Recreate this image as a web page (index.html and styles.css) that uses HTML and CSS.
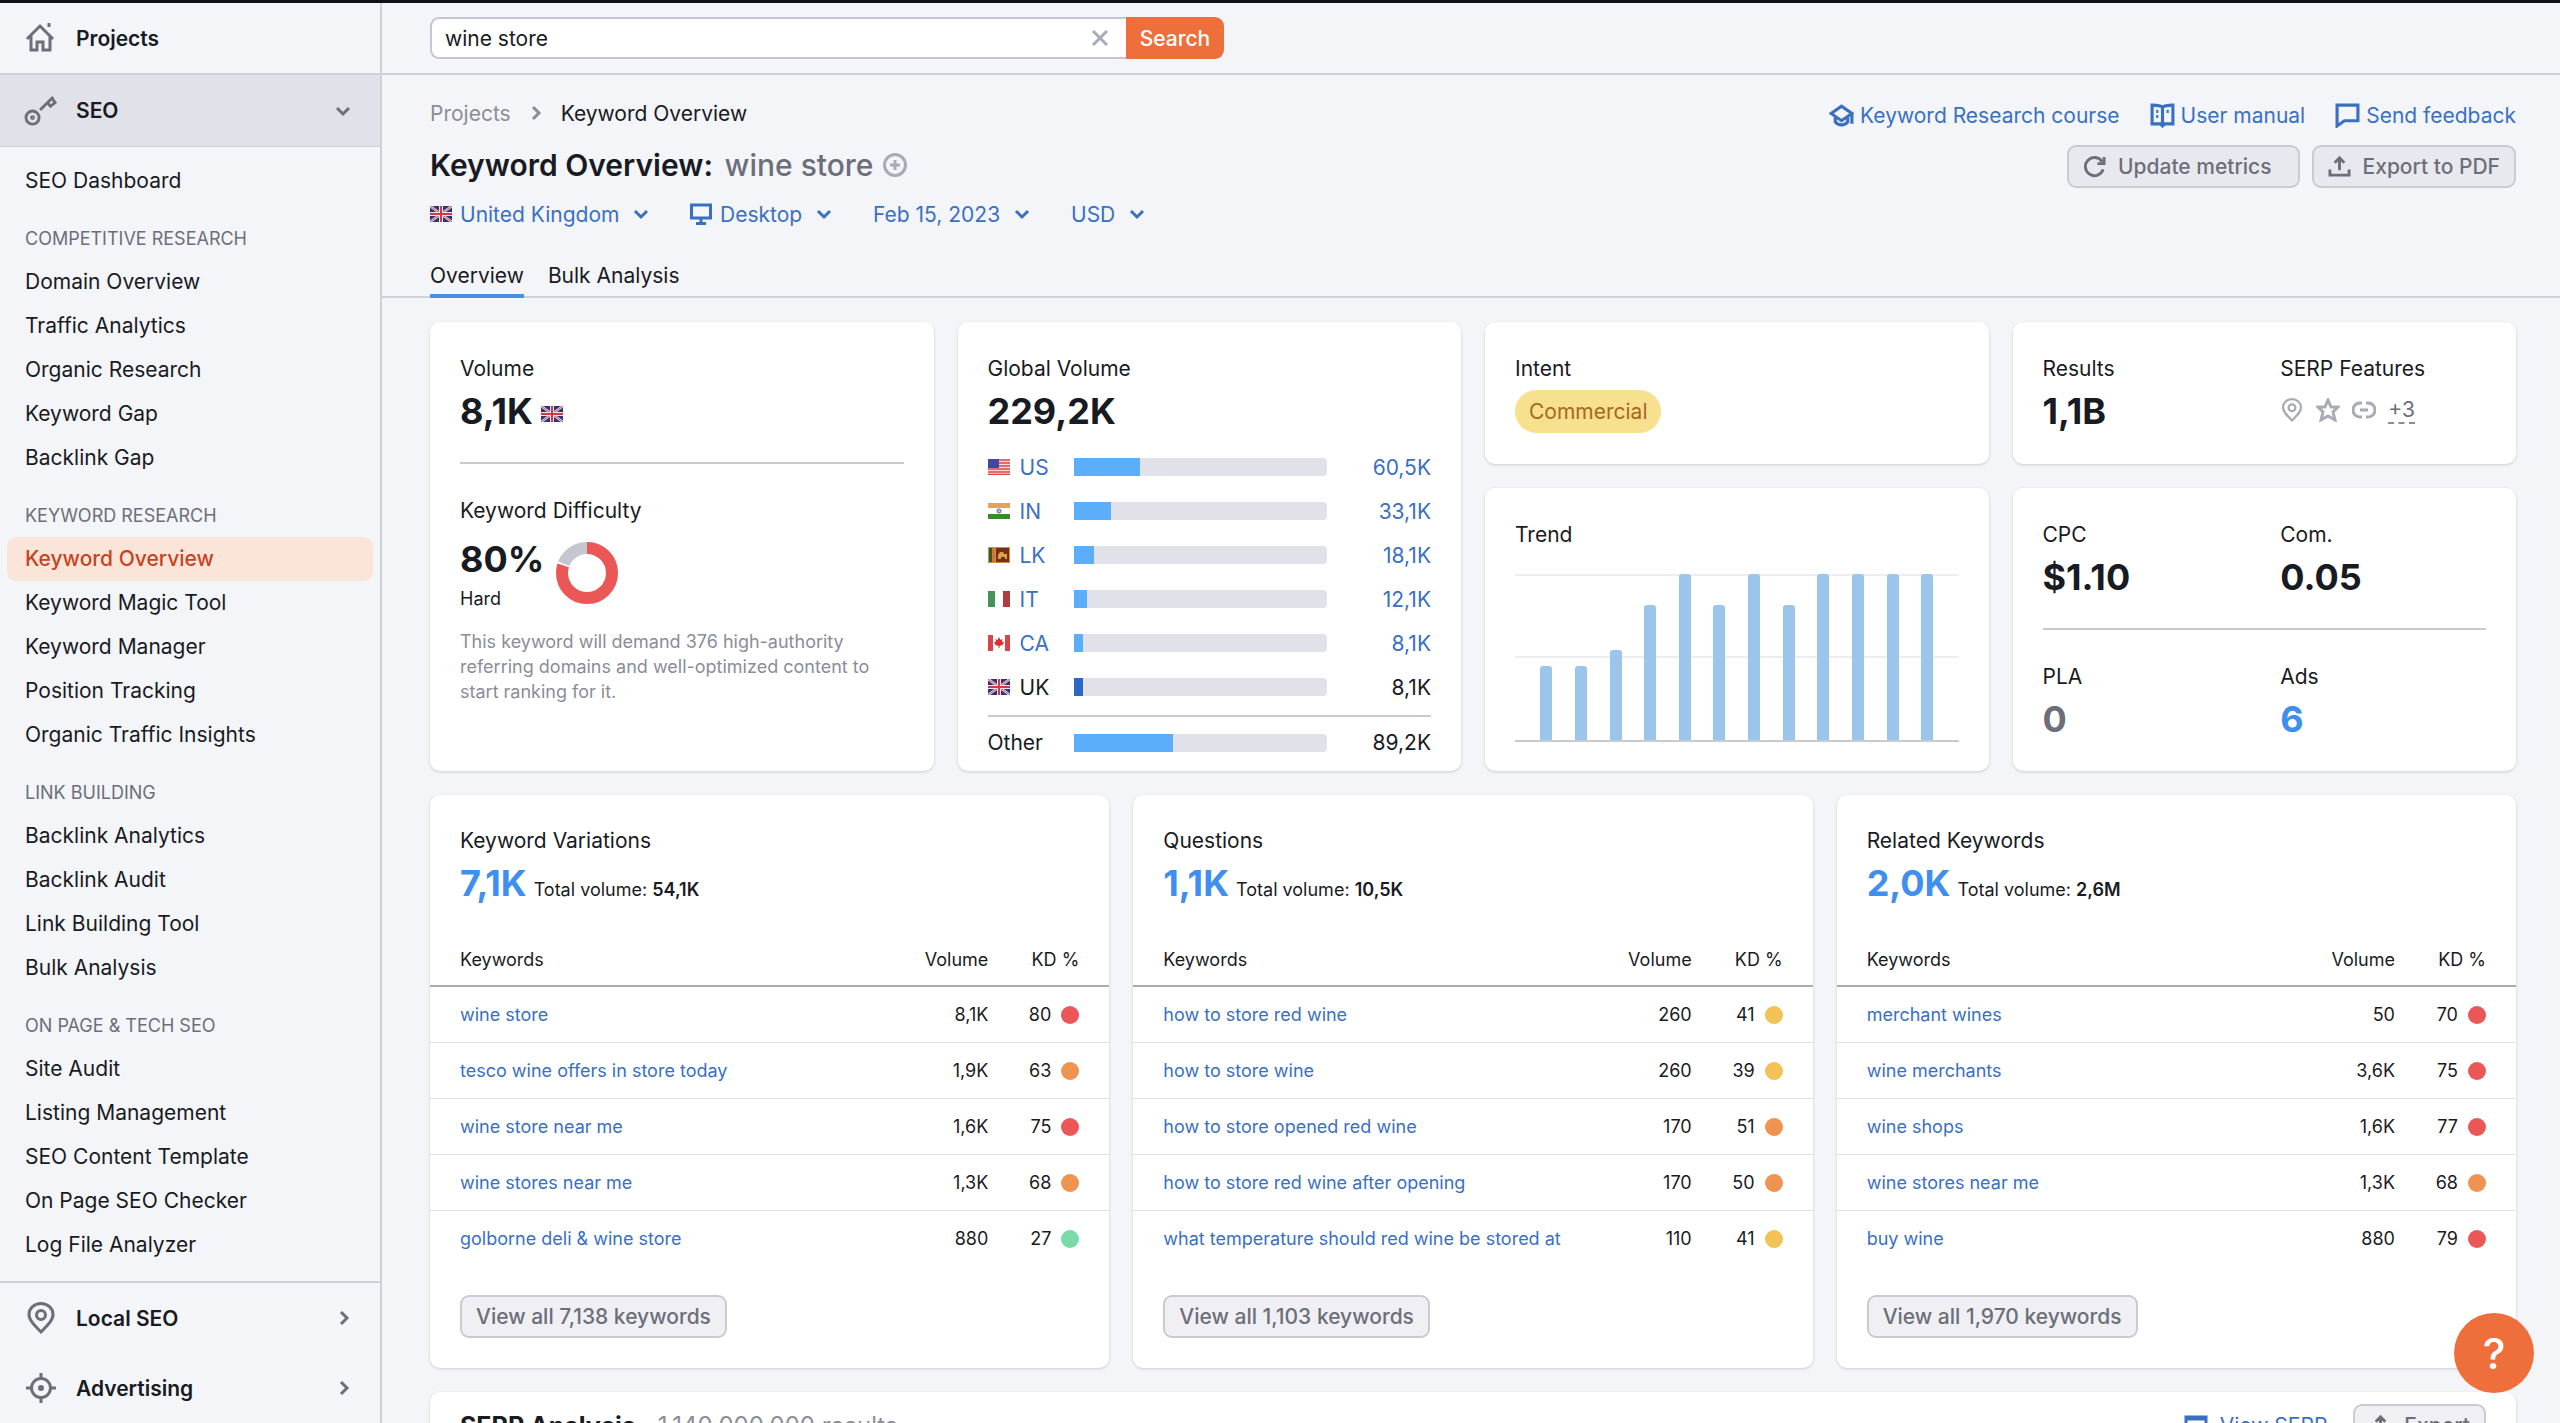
FILE: index.html
```html
<!DOCTYPE html>
<html lang="en">

<head>
    <meta charset="UTF-8">
    <meta name="viewport" content="width=device-width, initial-scale=1.0">
    <title>Keyword Overview: wine store</title>
    <link rel="stylesheet" href="styles.css">
</head>

<body>
    <!-- shared icons -->
    <svg class="sprite" aria-hidden="true">
        <symbol id="down" viewBox="0 0 18 12"><path d="M3 3l6 6 6-6" /></symbol>
        <symbol id="right" viewBox="0 0 12 18"><path d="M3 3l6 6-6 6" /></symbol>
        <symbol id="export" viewBox="0 0 24 24"><path d="M2 15v6h20v-6M12 16V3M7 8l5-5 5 5" /></symbol>
        <symbol id="pin" viewBox="0 0 30 32"><path d="M15 30C8 23 3 18 3 12.500a12 11 0 0 1 24 0C27 18 22 23 15 30z" /><circle cx="15" cy="13" r="4.500" /></symbol>
        <symbol id="uk" viewBox="0 0 22 16">
            <rect width="22" height="16" fill="#2b3478" />
            <path d="M0 0l22 16M22 0L0 16" stroke="#e9dfe8" stroke-width="2.500" />
            <path d="M0 0l22 16M22 0L0 16" stroke="#c8505e" stroke-width="1" />
            <path d="M11 0v16M0 8h22" stroke="#f3e3e8" stroke-width="4" />
            <path d="M11 0v16M0 8h22" stroke="#cf3a44" stroke-width="2" />
        </symbol>
        <symbol id="us" viewBox="0 0 22 16">
            <rect width="22" height="16" fill="#f6d9da" />
            <path d="M0 1h22M0 4h22M0 7h22M0 10h22M0 13h22M0 15.500h22" stroke="#d9484e" stroke-width="1.500" />
            <rect width="11" height="9" fill="#4247a0" />
        </symbol>
        <symbol id="in" viewBox="0 0 22 16">
            <rect width="22" height="16" fill="#fff" />
            <rect width="22" height="5" fill="#e8a05a" />
            <rect y="11" width="22" height="5" fill="#3c8a2e" />
            <circle cx="11" cy="8" r="2" fill="#b9bfd8" stroke="#5a6596" stroke-width="1" />
        </symbol>
        <symbol id="lk" viewBox="0 0 22 16">
            <rect width="22" height="16" fill="#cf9236" />
            <rect x="1" y="1" width="3" height="14" fill="#2f5a3c" />
            <rect x="4" y="1" width="3" height="14" fill="#d8752c" />
            <rect x="8" y="1" width="13" height="14" fill="#7a2a20" />
            <path d="M10 12V8l2-3h3l1 2h3v5h-2v-2h-4v2z" fill="#d9a53c" />
        </symbol>
        <symbol id="it" viewBox="0 0 22 16">
            <rect width="22" height="16" fill="#fff" />
            <rect width="7" height="16" fill="#43935a" />
            <rect x="15" width="7" height="16" fill="#b23b40" />
        </symbol>
        <symbol id="ca" viewBox="0 0 22 16">
            <rect width="22" height="16" fill="#fff" />
            <path d="M0 0h5v16H0zM17 0h5v16h-5z" fill="#d5454c" />
            <path d="M11 2l1.500 3 2-1-.5 3 2 0-1.500 3-3 1v2h-1v-2l-3-1L6 7h2l-.5-3 2 1z" fill="#d9302f" />
        </symbol>
    </svg>

    <div class="app">
        <nav class="sidebar">
            <a class="sidebar__group" href="#">
                <svg class="icon" viewBox="0 0 32 32"><path d="M2 17L15 4l13 13M6 14v14h6v-8h6v8h7V14M24 1v4" /></svg>
                <span>Projects</span>
            </a>
            <button class="sidebar__group sidebar__group--open">
                <svg class="icon" viewBox="0 0 34 34"><circle cx="8" cy="24" r="7" /><circle cx="8" cy="24" r="1" /><path d="M16 16L30 2M24 8l3 4 5-4-3-4" /></svg>
                <span>SEO</span>
                <svg class="chevron"><use href="#down" /></svg>
            </button>
            <div class="sidebar__menu">
                <a href="#">SEO Dashboard</a>
                <h2>COMPETITIVE RESEARCH</h2>
                <a href="#">Domain Overview</a>
                <a href="#">Traffic Analytics</a>
                <a href="#">Organic Research</a>
                <a href="#">Keyword Gap</a>
                <a href="#">Backlink Gap</a>
                <h2>KEYWORD RESEARCH</h2>
                <a class="active" href="#">Keyword Overview</a>
                <a href="#">Keyword Magic Tool</a>
                <a href="#">Keyword Manager</a>
                <a href="#">Position Tracking</a>
                <a href="#">Organic Traffic Insights</a>
                <h2>LINK BUILDING</h2>
                <a href="#">Backlink Analytics</a>
                <a href="#">Backlink Audit</a>
                <a href="#">Link Building Tool</a>
                <a href="#">Bulk Analysis</a>
                <h2>ON PAGE &amp; TECH SEO</h2>
                <a href="#">Site Audit</a>
                <a href="#">Listing Management</a>
                <a href="#">SEO Content Template</a>
                <a href="#">On Page SEO Checker</a>
                <a href="#">Log File Analyzer</a>
            </div>
            <button class="sidebar__group">
                <svg class="icon"><use href="#pin" /></svg>
                <span>Local SEO</span>
                <svg class="chevron chevron--right"><use href="#right" /></svg>
            </button>
            <button class="sidebar__group">
                <svg class="icon" viewBox="0 0 32 32"><circle cx="16" cy="16" r="9.500" /><circle cx="16" cy="16" r="1.500" /><path d="M16 1v6M16 25v6M1 16h6M25 16h6" /></svg>
                <span>Advertising</span>
                <svg class="chevron chevron--right"><use href="#right" /></svg>
            </button>
        </nav>

        <main class="main">
            <form class="topbar">
                <div class="search">
                    <input class="search__input" type="text" value="wine store" aria-label="Keyword">
                    <button class="search__clear" type="button" aria-label="Clear">
                        <svg viewBox="0 0 16 16"><path d="M1 1l14 14M15 1L1 15" /></svg>
                    </button>
                </div>
                <button class="search__button" type="submit">Search</button>
            </form>

            <header class="header">
                <div class="header__left">
                    <div class="breadcrumb">
                        <a href="#">Projects</a>
                        <svg class="chevron chevron--right"><use href="#right" /></svg>
                        <span>Keyword Overview</span>
                    </div>
                    <div class="title">
                        <h1>Keyword Overview: <span>wine store</span></h1>
                        <button aria-label="Add keyword">
                            <svg viewBox="0 0 24 24"><circle cx="12" cy="12" r="10.500" /><path d="M12 7v10M7 12h10" /></svg>
                        </button>
                    </div>
                    <div class="filters">
                        <label class="filter">
                            <svg class="flag"><use href="#uk" /></svg>
                            <select aria-label="Country"><option>United Kingdom</option></select>
                            <svg class="chevron"><use href="#down" /></svg>
                        </label>
                        <label class="filter">
                            <svg class="filter__icon" viewBox="0 0 22 22"><path d="M1.500 2h19v13h-19zM11 15v5M6 20.500h10" /></svg>
                            <select aria-label="Device"><option>Desktop</option></select>
                            <svg class="chevron"><use href="#down" /></svg>
                        </label>
                        <label class="filter">
                            <select aria-label="Date"><option>Feb 15, 2023</option></select>
                            <svg class="chevron"><use href="#down" /></svg>
                        </label>
                        <label class="filter">
                            <select aria-label="Currency"><option>USD</option></select>
                            <svg class="chevron"><use href="#down" /></svg>
                        </label>
                    </div>
                    <div class="tabs">
                        <a class="active" href="#">Overview</a>
                        <a href="#">Bulk Analysis</a>
                    </div>
                </div>
                <div class="header__right">
                    <div class="links">
                        <a href="#"><svg viewBox="0 0 24 24"><path d="M2 10l10-7 10 7-10 7zM6 14v4c3 4 9 4 12 0v-4M22 10v10" /></svg>Keyword Research course</a>
                        <a href="#"><svg viewBox="0 0 24 24"><path d="M12 4C10 2 5 2 2 2v18h8l2 2 2-2h8V2c-3 0-8 0-10 2zM12 4v17M6 8h2M6 13h2M16 8h2" /></svg>User manual</a>
                        <a href="#"><svg viewBox="0 0 24 24"><path d="M2 2h20v15H9l-7 5z" /></svg>Send feedback</a>
                    </div>
                    <div class="actions">
                        <button class="btn btn--wide"><svg viewBox="0 0 24 24"><path d="M21 15a9.500 9.500 0 1 1-1-8M22 2v7h-7" /></svg>Update metrics</button>
                        <button class="btn"><svg><use href="#export" /></svg>Export to PDF</button>
                    </div>
                </div>
            </header>

            <div class="content">
                <section class="summary">
                    <div class="card card--tall">
                        <h3>Volume</h3>
                        <p class="value">8,1K <svg class="flag"><use href="#uk" /></svg></p>
                        <hr>
                        <h3>Keyword Difficulty</h3>
                        <div class="difficulty">
                            <div>
                                <p class="value">80%</p>
                                <p class="difficulty__level">Hard</p>
                            </div>
                            <svg class="donut" viewBox="0 0 62 62">
                                <circle cx="31" cy="31" r="25" pathLength="100" stroke="#c4c7cf" />
                                <circle cx="31" cy="31" r="25" pathLength="100" stroke="#fff" stroke-dasharray="81 100" />
                                <circle cx="31" cy="31" r="25" pathLength="100" stroke="#eb5757" stroke-dasharray="80 100" />
                            </svg>
                        </div>
                        <p class="difficulty__note">This keyword will demand 376 high-authority referring domains and well-optimized content to start ranking for it.</p>
                    </div>

                    <div class="card card--tall card--global">
                        <h3>Global Volume</h3>
                        <p class="value">229,2K</p>
                        <ul class="countries">
                            <li><svg class="flag"><use href="#us" /></svg><a class="code" href="#">US</a><div class="bar"><div style="width: 26%"></div></div><a class="num" href="#">60,5K</a></li>
                            <li><svg class="flag"><use href="#in" /></svg><a class="code" href="#">IN</a><div class="bar"><div style="width: 14.5%"></div></div><a class="num" href="#">33,1K</a></li>
                            <li><svg class="flag"><use href="#lk" /></svg><a class="code" href="#">LK</a><div class="bar"><div style="width: 8%"></div></div><a class="num" href="#">18,1K</a></li>
                            <li><svg class="flag"><use href="#it" /></svg><a class="code" href="#">IT</a><div class="bar"><div style="width: 5%"></div></div><a class="num" href="#">12,1K</a></li>
                            <li><svg class="flag"><use href="#ca" /></svg><a class="code" href="#">CA</a><div class="bar"><div style="width: 3.6%"></div></div><a class="num" href="#">8,1K</a></li>
                            <li class="current"><svg class="flag"><use href="#uk" /></svg><span class="code">UK</span><div class="bar"><div style="width: 3.6%"></div></div><span class="num">8,1K</span></li>
                            <li class="other"><span class="code">Other</span><div class="bar"><div style="width: 39%"></div></div><span class="num">89,2K</span></li>
                        </ul>
                    </div>

                    <div class="card">
                        <h3>Intent</h3>
                        <div class="intent"><span>Commercial</span></div>
                    </div>

                    <div class="card columns">
                        <div>
                            <h3>Results</h3>
                            <p class="value">1,1B</p>
                        </div>
                        <div>
                            <h3>SERP Features</h3>
                            <div class="features">
                                <svg><use href="#pin" /></svg>
                                <svg viewBox="0 0 24 24"><path d="M12 2l3 7h7l-5 5 2 8-7-4-7 4 2-8-5-5h7z" /></svg>
                                <svg viewBox="0 0 24 24"><path d="M10 5H8a7 7 0 0 0 0 14h2M14 5h2a7 7 0 0 1 0 14h-2M8 12h8" /></svg>
                                <a href="#">+3</a>
                            </div>
                        </div>
                    </div>

                    <div class="card">
                        <h3>Trend</h3>
                        <div class="trend">
                            <div style="height: 44%"></div>
                            <div style="height: 44%"></div>
                            <div style="height: 54%"></div>
                            <div style="height: 81%"></div>
                            <div style="height: 100%"></div>
                            <div style="height: 81%"></div>
                            <div style="height: 100%"></div>
                            <div style="height: 81%"></div>
                            <div style="height: 100%"></div>
                            <div style="height: 100%"></div>
                            <div style="height: 100%"></div>
                            <div style="height: 100%"></div>
                        </div>
                    </div>

                    <div class="card">
                        <div class="columns">
                            <div>
                                <h3>CPC</h3>
                                <p class="value">$1.10</p>
                            </div>
                            <div>
                                <h3>Com.</h3>
                                <p class="value">0.05</p>
                            </div>
                        </div>
                        <hr>
                        <div class="columns">
                            <div>
                                <h3>PLA</h3>
                                <p class="value value--muted">0</p>
                            </div>
                            <div>
                                <h3>Ads</h3>
                                <p class="value value--link">6</p>
                            </div>
                        </div>
                    </div>
                </section>

                <section class="ideas">
                    <div class="card">
                        <h3>Keyword Variations</h3>
                        <p class="total"><a class="value value--link" href="#">7,1K</a><span>Total volume: <b>54,1K</b></span></p>
                        <table>
                            <thead>
                                <tr><th>Keywords</th><th>Volume</th><th>KD %</th></tr>
                            </thead>
                            <tbody>
                                <tr><td><a href="#">wine store</a></td><td>8,1K</td><td>80<i class="dot dot--red"></i></td></tr>
                                <tr><td><a href="#">tesco wine offers in store today</a></td><td>1,9K</td><td>63<i class="dot dot--orange"></i></td></tr>
                                <tr><td><a href="#">wine store near me</a></td><td>1,6K</td><td>75<i class="dot dot--red"></i></td></tr>
                                <tr><td><a href="#">wine stores near me</a></td><td>1,3K</td><td>68<i class="dot dot--orange"></i></td></tr>
                                <tr><td><a href="#">golborne deli &amp; wine store</a></td><td>880</td><td>27<i class="dot dot--green"></i></td></tr>
                            </tbody>
                        </table>
                        <button class="btn">View all 7,138 keywords</button>
                    </div>

                    <div class="card">
                        <h3>Questions</h3>
                        <p class="total"><a class="value value--link" href="#">1,1K</a><span>Total volume: <b>10,5K</b></span></p>
                        <table>
                            <thead>
                                <tr><th>Keywords</th><th>Volume</th><th>KD %</th></tr>
                            </thead>
                            <tbody>
                                <tr><td><a href="#">how to store red wine</a></td><td>260</td><td>41<i class="dot dot--yellow"></i></td></tr>
                                <tr><td><a href="#">how to store wine</a></td><td>260</td><td>39<i class="dot dot--yellow"></i></td></tr>
                                <tr><td><a href="#">how to store opened red wine</a></td><td>170</td><td>51<i class="dot dot--orange"></i></td></tr>
                                <tr><td><a href="#">how to store red wine after opening</a></td><td>170</td><td>50<i class="dot dot--orange"></i></td></tr>
                                <tr><td><a href="#">what temperature should red wine be stored at</a></td><td>110</td><td>41<i class="dot dot--yellow"></i></td></tr>
                            </tbody>
                        </table>
                        <button class="btn">View all 1,103 keywords</button>
                    </div>

                    <div class="card">
                        <h3>Related Keywords</h3>
                        <p class="total"><a class="value value--link" href="#">2,0K</a><span>Total volume: <b>2,6M</b></span></p>
                        <table>
                            <thead>
                                <tr><th>Keywords</th><th>Volume</th><th>KD %</th></tr>
                            </thead>
                            <tbody>
                                <tr><td><a href="#">merchant wines</a></td><td>50</td><td>70<i class="dot dot--red"></i></td></tr>
                                <tr><td><a href="#">wine merchants</a></td><td>3,6K</td><td>75<i class="dot dot--red"></i></td></tr>
                                <tr><td><a href="#">wine shops</a></td><td>1,6K</td><td>77<i class="dot dot--red"></i></td></tr>
                                <tr><td><a href="#">wine stores near me</a></td><td>1,3K</td><td>68<i class="dot dot--orange"></i></td></tr>
                                <tr><td><a href="#">buy wine</a></td><td>880</td><td>79<i class="dot dot--red"></i></td></tr>
                            </tbody>
                        </table>
                        <button class="btn">View all 1,970 keywords</button>
                    </div>
                </section>

                <section class="card serp">
                    <h2>SERP Analysis</h2>
                    <span class="serp__count">1.140.000.000 results</span>
                    <a class="serp__view" href="#"><svg viewBox="0 0 24 24"><path d="M2 3h20v18H2zM2 5h20" /></svg>View SERP</a>
                    <button class="btn"><svg><use href="#export" /></svg>Export</button>
                </section>
            </div>
        </main>
    </div>
    <button class="help" aria-label="Help">?</button>
</body>

</html>
```
FILE: styles.css
```css
* {
    margin: 0;
    padding: 0;
    box-sizing: border-box;
}

body {
    font-family: Inter, "Liberation Sans", sans-serif;
    font-size: 21px;
    color: #191b23;
    background-color: #f4f5f9;
}

a {
    color: #3a70c2;
    text-decoration: none;
}

button,
input,
select {
    font: inherit;
    color: inherit;
    border: none;
    background: none;
}

svg {
    flex-shrink: 0;
    fill: none;
    stroke: currentColor;
    stroke-width: 3;
}

.sprite {
    display: none;
}

.flag {
    width: 22px;
    height: 16px;
    stroke: none;
}

.chevron {
    width: 18px;
    height: 12px;
}

.chevron--right {
    width: 12px;
    height: 18px;
}

.app {
    height: 100vh;
    display: flex;
    border-top: 3px solid #111217;
}

/* sidebar */
.sidebar {
    width: 382px;
    flex-shrink: 0;
    border-right: 2px solid #cfd1d7;
    overflow: hidden;
}

.sidebar__group {
    width: 100%;
    height: 70px;
    padding: 0 28px 0 24px;
    display: flex;
    align-items: center;
    gap: 18px;
    font-weight: 600;
    text-align: left;
    color: #191b23;
}

.sidebar__group span {
    flex: 1;
}

.sidebar__group svg {
    color: #6c6e79;
}

.sidebar__group .icon {
    width: 34px;
    height: 32px;
}

.sidebar__group .chevron--right {
    margin-right: 2px;
}

.sidebar__group--open {
    height: 74px;
    background-color: #e0e1e9;
    border-top: 2px solid #cfd1d7;
    border-bottom: 1px solid #cfd1d7;
}

.sidebar__menu {
    padding: 12px 7px 14px;
    border-bottom: 2px solid #cfd1d7;
}

.sidebar__menu a {
    display: block;
    height: 44px;
    padding-left: 18px;
    line-height: 44px;
    border-radius: 9px;
    color: #191b23;
}

.sidebar__menu a.active {
    font-weight: 500;
    color: #c7441f;
    background-color: #fbe5d9;
}

.sidebar__menu h2 {
    height: 57px;
    padding: 16px 0 0 18px;
    font-size: 18px;
    font-weight: 400;
    line-height: 40px;
    color: #6c6e79;
}

/* top bar */
.main {
    flex: 1;
    min-width: 0;
    overflow-y: auto;
    scrollbar-width: none;
}

.topbar {
    height: 72px;
    padding: 0 48px;
    display: flex;
    align-items: center;
    border-bottom: 2px solid #cfd1d7;
}

.search {
    width: 696px;
    height: 42px;
    display: flex;
    align-items: center;
    background-color: #fff;
    border: 2px solid #c4c7cf;
    border-right: none;
    border-radius: 9px 0 0 9px;
}

.search__input {
    flex: 1;
    padding-left: 13px;
    outline: none;
}

.search__clear {
    width: 52px;
    height: 38px;
    color: #a9abb6;
}

.search__clear svg {
    width: 16px;
    height: 16px;
    stroke-width: 3;
}

.search__button {
    width: 98px;
    height: 42px;
    font-weight: 500;
    color: #fff;
    background-color: #ef6f3c;
    border-radius: 0 9px 9px 0;
}

/* page header */
.header {
    height: 223px;
    padding: 20px 44px 0 48px;
    display: flex;
    justify-content: space-between;
    border-bottom: 2px solid #cfd1d7;
}

.breadcrumb {
    height: 36px;
    display: flex;
    align-items: center;
    gap: 19px;
}

.breadcrumb a,
.breadcrumb svg {
    color: #8a8d98;
}

.title {
    height: 68px;
    display: flex;
    align-items: center;
    gap: 9px;
}

.title h1 {
    font-size: 30px;
    font-weight: 600;
}

.title h1 span {
    margin-left: 4px;
    font-weight: 500;
    color: #6c6e79;
}

.title button {
    height: 24px;
    color: #a9abb6;
}

.title svg {
    width: 24px;
    height: 24px;
}

.filters {
    height: 30px;
    display: flex;
    align-items: center;
    gap: 40px;
}

.filter {
    display: flex;
    align-items: center;
    gap: 8px;
    color: #3a70c2;
}

.filter select {
    appearance: none;
}

.filter .chevron {
    margin-left: 4px;
}

.filter__icon {
    width: 22px;
    height: 22px;
}

.tabs {
    height: 69px;
    display: flex;
    gap: 24px;
}

.tabs a {
    padding-top: 34px;
    line-height: 26px;
    color: #191b23;
}

.tabs a.active {
    border-bottom: 4px solid #4a90e2;
}

.header__right {
    display: flex;
    flex-direction: column;
    align-items: flex-end;
}

.links {
    height: 40px;
    display: flex;
    align-items: center;
    gap: 30px;
}

.links a {
    display: flex;
    align-items: center;
    gap: 6px;
}

.links svg {
    width: 25px;
    height: 25px;
}

.actions {
    margin-top: 10px;
    display: flex;
    gap: 12px;
}

.btn {
    height: 43px;
    padding: 0 14px;
    display: flex;
    align-items: center;
    gap: 12px;
    font-weight: 500;
    color: #6c6e79;
    background-color: #f0f0f4;
    border: 2px solid #c9cbd2;
    border-radius: 9px;
}

.actions .btn {
    background-color: #e8e9ef;
}

.btn--wide {
    padding-right: 26px;
}

.btn svg {
    width: 23px;
    height: 23px;
}

/* cards */
.content {
    padding: 24px 44px 24px 48px;
    display: flex;
    flex-direction: column;
    gap: 24px;
}

.card {
    padding: 31px 30px 26px;
    background-color: #fff;
    border-radius: 10px;
    box-shadow: 0 1px 3px rgba(25, 27, 35, 0.18);
}

.card h3 {
    font-size: 21px;
    font-weight: 400;
    line-height: 32px;
}

.card hr {
    height: 2px;
    margin: 25px 0 31px;
    border: none;
    background-color: #c9cbd2;
}

.value {
    font-size: 36px;
    font-weight: 700;
    line-height: 52px;
}

.value .flag {
    vertical-align: 2px;
}

.value--muted {
    color: #6c6e79;
}

.value--link {
    color: #3e8fef;
}

.summary {
    display: grid;
    grid-template-columns: repeat(4, 1fr);
    gap: 24px;
}

.card--tall {
    grid-row: span 2;
}

.columns {
    display: grid;
    grid-template-columns: 1fr 1fr;
    column-gap: 32px;
}

.difficulty {
    margin-top: 6px;
    display: flex;
    align-items: center;
    gap: 12px;
}

.difficulty__level {
    font-size: 18px;
    line-height: 28px;
}

.donut {
    width: 62px;
    height: 62px;
    stroke-width: 12;
    transform: rotate(-90deg);
}

.difficulty__note {
    margin-top: 16px;
    font-size: 18px;
    line-height: 25px;
    color: #8a8d98;
}

.card--global {
    padding-bottom: 5px;
}

.countries {
    padding-top: 8px;
    list-style: none;
}

.countries li {
    height: 44px;
    display: flex;
    align-items: center;
}

.countries .flag {
    margin-right: 10px;
}

.countries .code {
    flex: 1;
}

.countries .bar {
    width: 253px;
    height: 18px;
    background-color: #e0e1e9;
    border-radius: 0 4px 4px 0;
}

.bar div {
    height: 100%;
    background-color: #5aaefa;
}

.current .bar div {
    background-color: #2b67c4;
}

.countries .num {
    width: 104px;
    text-align: right;
}

.countries .other {
    height: 51px;
    margin-top: 6px;
    padding-top: 2px;
    border-top: 2px solid #c9cbd2;
}

.intent {
    height: 52px;
    display: flex;
    align-items: center;
}

.intent span {
    padding: 0 14px;
    line-height: 43px;
    color: #a6691f;
    background-color: #f7e08e;
    border-radius: 22px;
}

.features {
    height: 50px;
    display: flex;
    align-items: center;
    gap: 12px;
    color: #a9abb6;
}

.features svg {
    width: 24px;
    height: 24px;
}

.features a {
    color: #6c6e79;
    border-bottom: 2px dashed #8a8d98;
}

.trend {
    height: 168px;
    margin-top: 23px;
    padding: 0 14px;
    display: grid;
    grid-template-columns: repeat(12, 1fr);
    align-items: end;
    justify-items: center;
    background: linear-gradient(#ececf1, #ececf1) 0 0 / 100% 2px no-repeat,
        linear-gradient(#ececf1, #ececf1) 0 50% / 100% 2px no-repeat;
    border-bottom: 2px solid #c9cbd2;
}

.trend div {
    width: 12px;
    background-color: #9bc5ea;
    border-radius: 3px 3px 0 0;
}

/* keyword ideas */
.ideas {
    display: grid;
    grid-template-columns: repeat(3, 1fr);
    gap: 24px;
}

.ideas .card {
    padding: 30px 0;
}

.ideas h3,
.total {
    padding: 0 30px;
}

.total {
    height: 52px;
    display: flex;
    align-items: baseline;
    gap: 7px;
    font-size: 18px;
}

.total b {
    font-weight: 600;
}

table {
    width: 100%;
    margin-top: 25px;
    border-collapse: collapse;
    font-size: 18px;
}

th,
td {
    width: 91px;
    text-align: right;
    font-weight: 400;
}

th {
    height: 52px;
    border-bottom: 2px solid #a9abb6;
}

td {
    height: 56px;
    border-bottom: 1px solid #e0e1e9;
}

tr:last-child td {
    border-bottom: none;
}

th:first-child,
td:first-child {
    width: auto;
    padding-left: 30px;
    text-align: left;
}

th:last-child,
td:last-child {
    width: 121px;
    padding-right: 30px;
}

.dot {
    width: 18px;
    height: 18px;
    margin-left: 10px;
    display: inline-block;
    vertical-align: -3px;
    border-radius: 50%;
}

.dot--red {
    background-color: #eb5757;
}

.dot--orange {
    background-color: #ef9350;
}

.dot--yellow {
    background-color: #f3c257;
}

.dot--green {
    background-color: #7bdba8;
}

.ideas .btn {
    margin: 29px 30px 0;
}

.serp {
    padding: 12px 30px 30px;
    display: flex;
    align-items: center;
}

.serp h2 {
    font-size: 25px;
    font-weight: 700;
}

.serp__count {
    margin-left: 22px;
    flex: 1;
    font-size: 24px;
    color: #8a8d98;
}

.serp__view {
    margin-right: 26px;
    display: flex;
    align-items: center;
    gap: 12px;
}

.serp__view svg {
    width: 24px;
    height: 24px;
}

.help {
    width: 80px;
    height: 80px;
    position: fixed;
    right: 26px;
    bottom: 30px;
    font-size: 43px;
    font-weight: 500;
    color: #fff;
    background-color: #ef6f3c;
    border-radius: 50%;
}
```
